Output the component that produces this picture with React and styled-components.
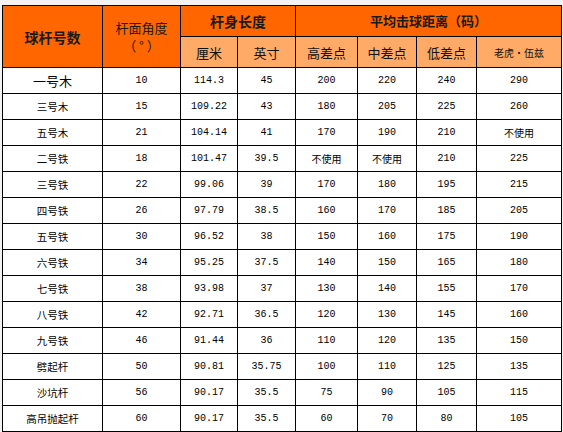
import styled, { createGlobalStyle } from 'styled-components';

const GlobalStyle = createGlobalStyle`
  body {
    margin: 0;
    background: #f2f2f2;
    font-family: "Noto Sans CJK SC", sans-serif;
  }
`;

const COLS = [100, 78, 57, 58, 62, 59, 60, 85];

const rows = [
  ['一号木', '10', '114.3', '45', '200', '220', '240', '290'],
  ['三号木', '15', '109.22', '43', '180', '205', '225', '260'],
  ['五号木', '21', '104.14', '41', '170', '190', '210', '不使用'],
  ['二号铁', '18', '101.47', '39.5', '不使用', '不使用', '210', '225'],
  ['三号铁', '22', '99.06', '39', '170', '180', '195', '215'],
  ['四号铁', '26', '97.79', '38.5', '160', '170', '185', '205'],
  ['五号铁', '30', '96.52', '38', '150', '160', '175', '190'],
  ['六号铁', '34', '95.25', '37.5', '140', '150', '165', '180'],
  ['七号铁', '38', '93.98', '37', '130', '140', '155', '170'],
  ['八号铁', '42', '92.71', '36.5', '120', '130', '145', '160'],
  ['九号铁', '46', '91.44', '36', '110', '120', '135', '150'],
  ['劈起杆', '50', '90.81', '35.75', '100', '110', '125', '135'],
  ['沙坑杆', '56', '90.17', '35.5', '75', '90', '105', '115'],
  ['高吊抛起杆', '60', '90.17', '35.5', '60', '70', '80', '105'],
];

export default function App() {
  return (
    <>
      <GlobalStyle />
      <Page>
        <Table>
          <colgroup>
            {COLS.map((w, i) => <col key={i} style={{ width: w }} />)}
          </colgroup>
          <thead>
            <tr>
              <HeadCell rowSpan={2} $bold $size={14}>球杆号数</HeadCell>
              <HeadCell rowSpan={2} $size={13}>
                杆面角度<br />（&nbsp;°&nbsp;）
              </HeadCell>
              <HeadCell colSpan={2} $bold $size={14}>杆身长度</HeadCell>
              <HeadCell colSpan={4} $bold $size={13}>平均击球距离（码）</HeadCell>
            </tr>
            <tr>
              <SubCell>厘米</SubCell>
              <SubCell>英寸</SubCell>
              <SubCell>高差点</SubCell>
              <SubCell>中差点</SubCell>
              <SubCell>低差点</SubCell>
              <SubCell $small>老虎·伍兹</SubCell>
            </tr>
          </thead>
          <tbody>
            {rows.map((r, i) => (
              <tr key={i}>
                {r.map((v, j) => (
                  <Cell key={j} $name={j === 0} $big={i === 0 && j === 0}>{v}</Cell>
                ))}
              </tr>
            ))}
          </tbody>
        </Table>
      </Page>
    </>
  );
}

const Page = styled.div`
  padding: 5px 0 0 2px;
`;

const Table = styled.table`
  border-collapse: collapse;
  table-layout: fixed;
  width: 559px;
  background: #fff;
  border: 1px solid #000;
`;

const HeadCell = styled.th`
  background: #ff6600;
  color: #1a1a1a;
  border: 1px solid #000;
  height: 30px;
  padding: 0;
  text-align: center;
  font-size: ${p => p.$size}px;
  font-weight: ${p => (p.$bold ? 700 : 400)};
  line-height: 18px;
`;

const SubCell = styled.th`
  background: #ffaa66;
  color: #111;
  border: 1px solid #000;
  height: 30px;
  padding: 0;
  text-align: center;
  font-weight: 400;
  font-size: ${p => (p.$small ? 10 : 13)}px;
`;

const Cell = styled.td`
  border: 1px solid #000;
  height: 25px;
  padding: 0;
  text-align: center;
  color: #000;
  font-family: ${p => (p.$name ? '"Noto Sans CJK SC", sans-serif' : '"Liberation Mono", "Noto Sans CJK SC", monospace')};
  font-size: ${p => (p.$big ? 13 : p.$name ? 10.5 : 10)}px;
`;
